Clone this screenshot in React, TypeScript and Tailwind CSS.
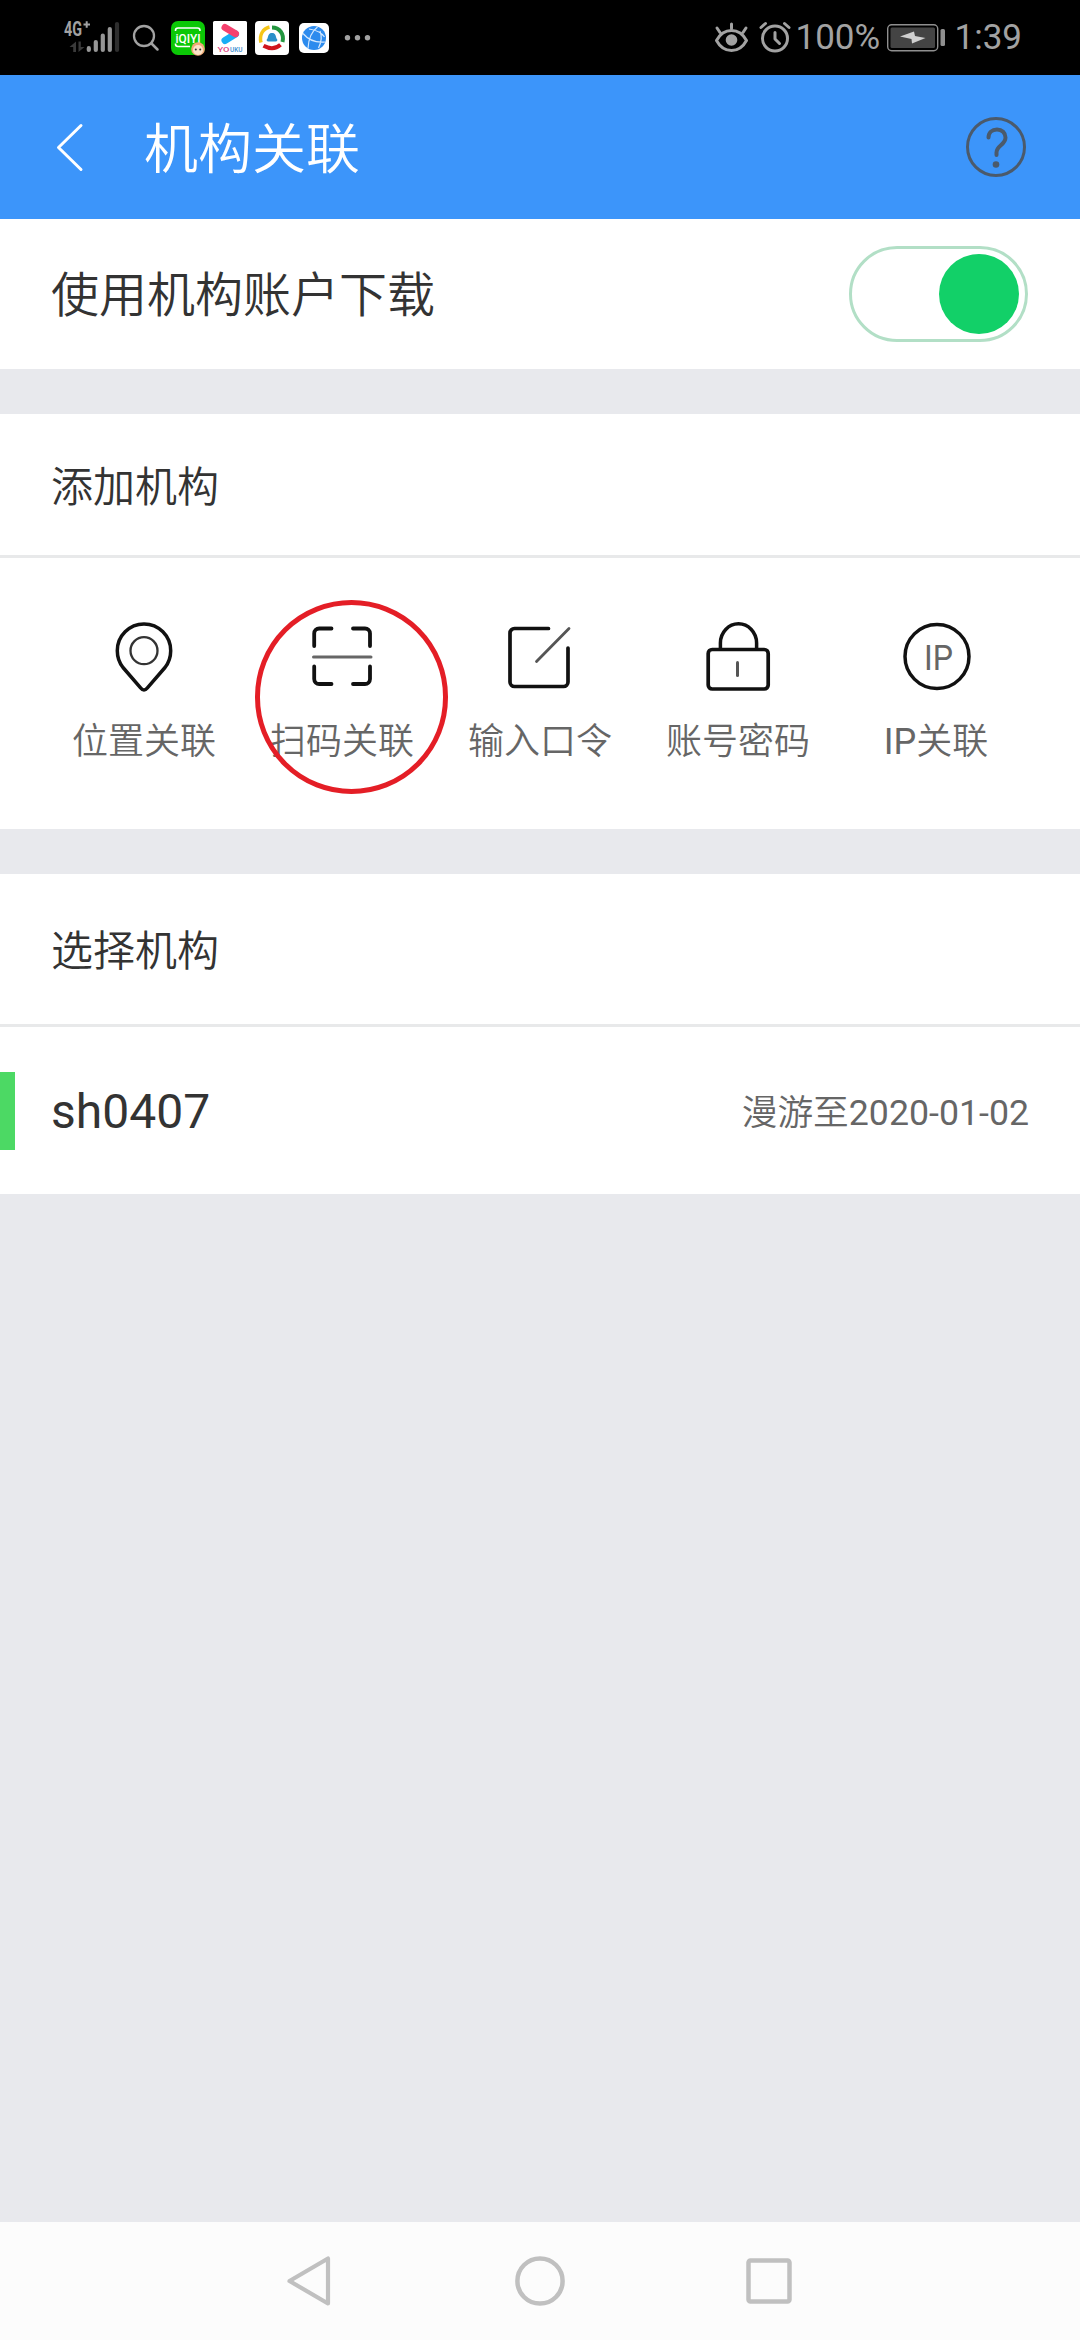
import type { ReactNode } from 'react';

interface LinkMethod {
    id: string;
    label: ReactNode;
    icon: ReactNode;
}

const linkMethods: LinkMethod[] = [
    {
        id: 'location',
        label: '位置关联',
        icon: (
            <>
                <path d="M40 73c-1.500 0-2.400-1-3.400-2.200L19 50.500C15.500 46 13.300 40 13.300 33.700a26.700 26.700 0 0 1 53.400 0C66.700 40 64.500 46 61 50.500L43.400 70.800C42.400 72 41.500 73 40 73Z" strokeWidth="3.500" />
                <circle cx="40" cy="33.700" r="13.500" stroke="#333" strokeWidth="2.300" />
            </>
        ),
    },
    {
        id: 'scan',
        label: '扫码关联',
        icon: (
            <>
                <path d="M12.200 29V16.500a5 5 0 0 1 5-5H29.500M51 11.500H63a5 5 0 0 1 5 5V29M68 49.500V62a5 5 0 0 1-5 5H51M29.500 67H17.200a5 5 0 0 1-5-5V49.500" strokeWidth="3.800" />
                <path d="M11.500 40H69" stroke="#666" strokeWidth="3" />
            </>
        ),
    },
    {
        id: 'password',
        label: '输入口令',
        icon: (
            <>
                <path d="M48.500 11.500H14.500a4.500 4.500 0 0 0-4.500 4.500V65a4.500 4.500 0 0 0 4.500 4.500H63.500A4.500 4.500 0 0 0 68 65V31" strokeWidth="3.700" />
                <path d="M36.500 44.500L69 11.500" stroke="#555" strokeWidth="2.800" />
            </>
        ),
    },
    {
        id: 'account',
        label: '账号密码',
        icon: (
            <>
                <rect x="10.200" y="32.500" width="60" height="39.500" rx="4" strokeWidth="3.700" />
                <path d="M22.400 32V26a18.100 19.200 0 0 1 36.200 0V32" strokeWidth="3.500" />
                <path d="M39.500 45.500V58.500" stroke="#555" strokeWidth="3" />
            </>
        ),
    },
    {
        id: 'ip',
        label: <><span className="font-normal">IP</span>关联</>,
        icon: (
            <>
                <circle cx="41" cy="39.500" r="32" strokeWidth="3.500" />
                <text x="28" y="53" textLength="29" lengthAdjust="spacingAndGlyphs" fill="#666" stroke="none" fontSize="35" fontWeight="400" fontFamily="Roboto">IP</text>
            </>
        ),
    },
];

function StatusBar() {
    return (
        <div className="h-[75px] bg-black flex items-center justify-between pl-[62px] pr-[58px] text-[#a2a2a2]">
            <svg width="320" height="75" viewBox="62 0 320 75" fill="none">
                <text x="64" y="36" textLength="18" lengthAdjust="spacingAndGlyphs" fill="#a2a2a2" fontSize="20" fontWeight="700" fontFamily="Roboto">4G</text>
                <path d="M83.500 24.500h6.500M86.700 21.200v6.600" stroke="#a2a2a2" strokeWidth="2" />
                <path d="M76 41.500V52h-2.800v-5H69.500ZM78.500 52V41.500h2.300v5.500h3.700Z" fill="#3a3a3a" />
                <g strokeLinecap="round" strokeWidth="4.200" stroke="#969696">
                    <path d="M88.800 48.200v1.800M95.800 42v8M102.800 35.500v14.500M109.800 29v21" />
                    <path d="M117 24v26" stroke="#2e2e2e" />
                </g>
                <circle cx="144" cy="36" r="10" stroke="#a2a2a2" strokeWidth="2.300" />
                <path d="M151.500 43.500l6 6" stroke="#a2a2a2" strokeWidth="2.500" strokeLinecap="round" />

                {/* iQIYI */}
                <rect x="171" y="21" width="34" height="34" rx="7" fill="#0bc806" />
                <path d="M175.500 31v-.5a2.500 2.500 0 0 1 2.500-2.500h19.500a2.500 2.500 0 0 1 2.500 2.500V31M175.500 43.500v.5a2.500 2.500 0 0 0 2.500 2.500h12" stroke="#fff" strokeWidth="1.600" />
                <text x="175.500" y="42.700" textLength="25" lengthAdjust="spacingAndGlyphs" fill="#fff" fontSize="13" fontWeight="500" fontFamily="Roboto">iQIYI</text>
                <circle cx="198" cy="49" r="6.800" fill="#f0a878" />
                <circle cx="198" cy="50" r="5" fill="#fbe3c8" />
                <circle cx="195.800" cy="49.500" r="1" fill="#333" />
                <circle cx="200.200" cy="49.500" r="1" fill="#333" />

                {/* Youku */}
                <rect x="213" y="21" width="34" height="34" rx="1.500" fill="#fff" />
                <path d="M225 40.500l10.500-6.500" stroke="#18aef5" strokeWidth="7" strokeLinecap="round" />
                <path d="M225 27.500l10.500 6.200" stroke="#f5416e" strokeWidth="7" strokeLinecap="round" />
                <text x="217.500" y="52" textLength="12" lengthAdjust="spacingAndGlyphs" fill="#e0457f" fontSize="7.500" fontWeight="500" fontFamily="Roboto">YO</text>
                <text x="230" y="52" textLength="12.500" lengthAdjust="spacingAndGlyphs" fill="#3f8fd0" fontSize="7.500" fontWeight="500" fontFamily="Roboto">UKU</text>

                {/* Tencent news */}
                <rect x="255" y="21" width="34" height="34" rx="4" fill="#fff" />
                <path d="M261 42.500C259 35 263 28.500 269.500 27" stroke="#f5c518" strokeWidth="3.500" />
                <path d="M272 27.500c7.500 0 12.500 6.500 10.500 14.500" stroke="#23963f" strokeWidth="4" />
                <path d="M280.500 44.800c-4.500 4-11 4.200-17 1" stroke="#d0141c" strokeWidth="4" />
                <path d="M268.500 41.500c-2 0-2.500-1.500-1-3 .8-3 1-5.500 4.500-5.500s3.700 2.500 4.500 5.500c1.500 1.500 1 3-1 3Z" fill="#2b8fc9" />

                {/* Browser */}
                <rect x="299" y="23" width="30" height="30" rx="5" fill="#fff" />
                <circle cx="314" cy="38" r="12" fill="#2c8bee" />
                <path d="M317.500 27c-5.500 4-9 12-9.500 21.500M303 33.500c5 6 12 9.500 22 8.500M309 29c7 1 13 4 15.500 8M320 31c2 5 1.500 11-1.500 17" stroke="#d5e9ff" strokeWidth="1.200" />

                <circle cx="347.500" cy="37.700" r="2.700" fill="#a2a2a2" />
                <circle cx="357.500" cy="37.700" r="2.700" fill="#a2a2a2" />
                <circle cx="367.500" cy="37.700" r="2.700" fill="#a2a2a2" />
            </svg>

            <div className="flex items-center font-[Roboto] text-[35px] leading-[40px]">
                <svg width="80" height="75" viewBox="713 0 80 75" fill="none" stroke="#a2a2a2" strokeLinecap="round" strokeLinejoin="round">
                    <path d="M716.500 40.500c3.500-6.500 9-10 15-10s11.500 3.500 15 10c-3.500 6.500-9 10-15 10s-11.500-3.500-15-10Z" strokeWidth="3" />
                    <circle cx="731.500" cy="40" r="5.800" fill="#a2a2a2" stroke="none" />
                    <path d="M731.500 24v4.500M717 28l3 4.500M746 28l-3 4.500" strokeWidth="3" />
                    <circle cx="775" cy="38.500" r="12.500" strokeWidth="3" />
                    <path d="M775 32.500v6.500l4.500 4.500" strokeWidth="3" />
                    <path d="M761 27.500l4.500-4M789 27.500l-4.500-4" strokeWidth="3" />
                </svg>
                <span className="mt-px w-[92px] pl-[3px]">100%</span>
                <svg width="70" height="75" viewBox="885 0 70 75" fill="none">
                    <rect x="887.700" y="24.700" width="50" height="26" rx="4" stroke="#8f8f8f" strokeWidth="1.400" />
                    <rect x="890.500" y="27.500" width="44.500" height="20.500" rx="1.500" fill="#444" />
                    <path d="M914 31.500l-14 5 11.500 2.500 .5 4.500 13.500-5.500-10.500-2Z" fill="#cfcfcf" />
                    <rect x="940.500" y="29" width="4.500" height="17" rx="1.500" fill="#8f8f8f" />
                </svg>
                <span className="mt-px">1:39</span>
            </div>
        </div>
    );
}

function Header() {
    return (
        <header className="h-36 bg-[#3c95fa] flex items-center pl-[50px] pr-[52px]">
            <svg width="40" height="60" viewBox="50 117 40 60" fill="none" stroke="#fff" strokeWidth="3" strokeLinecap="round" strokeLinejoin="round">
                <path d="M81 125.500L58.500 147.500L81 169.500" />
            </svg>
            <h1 className="ml-[54px] mt-2 flex-1 text-[54px] leading-[60px] font-[350] text-white">机构关联</h1>
            <svg width="64" height="64" viewBox="964 115 64 64" fill="none" stroke="#4b5a6b" strokeLinecap="round">
                <circle cx="996" cy="147" r="28.500" strokeWidth="3" />
                <path d="M988.500 137.500c0-5 3.500-8 8.500-8s8.500 3.500 8.500 8c0 7.500-9 8-9 15v2.500" strokeWidth="4" />
                <circle cx="996" cy="164.500" r="3.300" fill="#4b5a6b" stroke="none" />
            </svg>
        </header>
    );
}

function SectionTitle({ children }: { children: ReactNode }) {
    return <h2 className="mt-1.5 px-[51px] text-[42px] leading-[60px] font-[350]">{children}</h2>;
}

function NavBar() {
    return (
        <nav className="h-[118px] bg-[#fcfcfc] flex items-center justify-between px-[285px]">
            <svg width="50" height="50" viewBox="0 0 50 50" fill="none" stroke="#c0c0c0" strokeWidth="4.200" strokeLinejoin="round">
                <path d="M43 2.500V47.500L4.500 25Z" />
            </svg>
            <svg width="50" height="50" viewBox="0 0 50 50" fill="none" stroke="#c0c0c0" strokeWidth="4.500">
                <circle cx="25" cy="25" r="22.600" />
            </svg>
            <svg width="50" height="50" viewBox="0 0 50 50" fill="none" stroke="#c0c0c0" strokeWidth="4.500">
                <rect x="3.500" y="4.500" width="41" height="41" rx="2" />
            </svg>
        </nav>
    );
}

export default function App() {
    return (
        <div className="w-[1080px] h-[2340px] flex flex-col bg-[#e8e9ed] text-[#333] font-[Roboto,'Noto_Sans_CJK_SC',sans-serif]">
            <StatusBar />
            <Header />

            <div className="h-[150px] bg-white flex items-center justify-between pl-[51px] pr-[52px]">
                <span className="mt-1 text-5xl leading-[60px] font-[350]">使用机构账户下载</span>
                <button className="w-[179px] h-24 rounded-full border-3 border-[#b2dfc6] flex items-center justify-end pr-1.5">
                    <span className="size-20 rounded-full bg-[#12d068]" />
                </button>
            </div>

            <section className="mt-[45px] bg-white">
                <div className="h-36 border-b-3 border-[#e8e9ea] flex items-center">
                    <SectionTitle>添加机构</SectionTitle>
                </div>
                <div className="relative h-[271px] px-[45px] pt-[59px] grid grid-cols-5">
                    {linkMethods.map((method) => (
                        <div key={method.id} className="flex flex-col items-center">
                            <svg width="80" height="80" viewBox="0 0 80 80" fill="none" stroke="#111" strokeLinecap="round" strokeLinejoin="round">
                                {method.icon}
                            </svg>
                            <span className="mt-[23px] text-4xl leading-[44px] font-[350] text-[#666]">{method.label}</span>
                        </div>
                    ))}
                    {/* hand-drawn marker around the scan entry */}
                    <div className="absolute left-[255px] top-[42px] w-[193px] h-[194px] rounded-full border-5 border-[#e41e26]" />
                </div>
            </section>

            <section className="mt-[45px] bg-white">
                <div className="h-[153px] border-b-3 border-[#e8e9ea] flex items-center">
                    <SectionTitle>选择机构</SectionTitle>
                </div>
                <div className="h-[167px] flex items-center pr-[51px]">
                    <div className="w-[15px] h-[78px] bg-[#4cd964]" />
                    <span className="ml-9 mt-[3px] flex-1 text-5xl leading-[60px]">sh0407</span>
                    <span className="mt-1 text-[35.7px] leading-[44px] font-[350] text-[#666]">漫游至<span className="font-normal">2020-01-02</span></span>
                </div>
            </section>

            <div className="flex-1" />
            <NavBar />
        </div>
    );
}
